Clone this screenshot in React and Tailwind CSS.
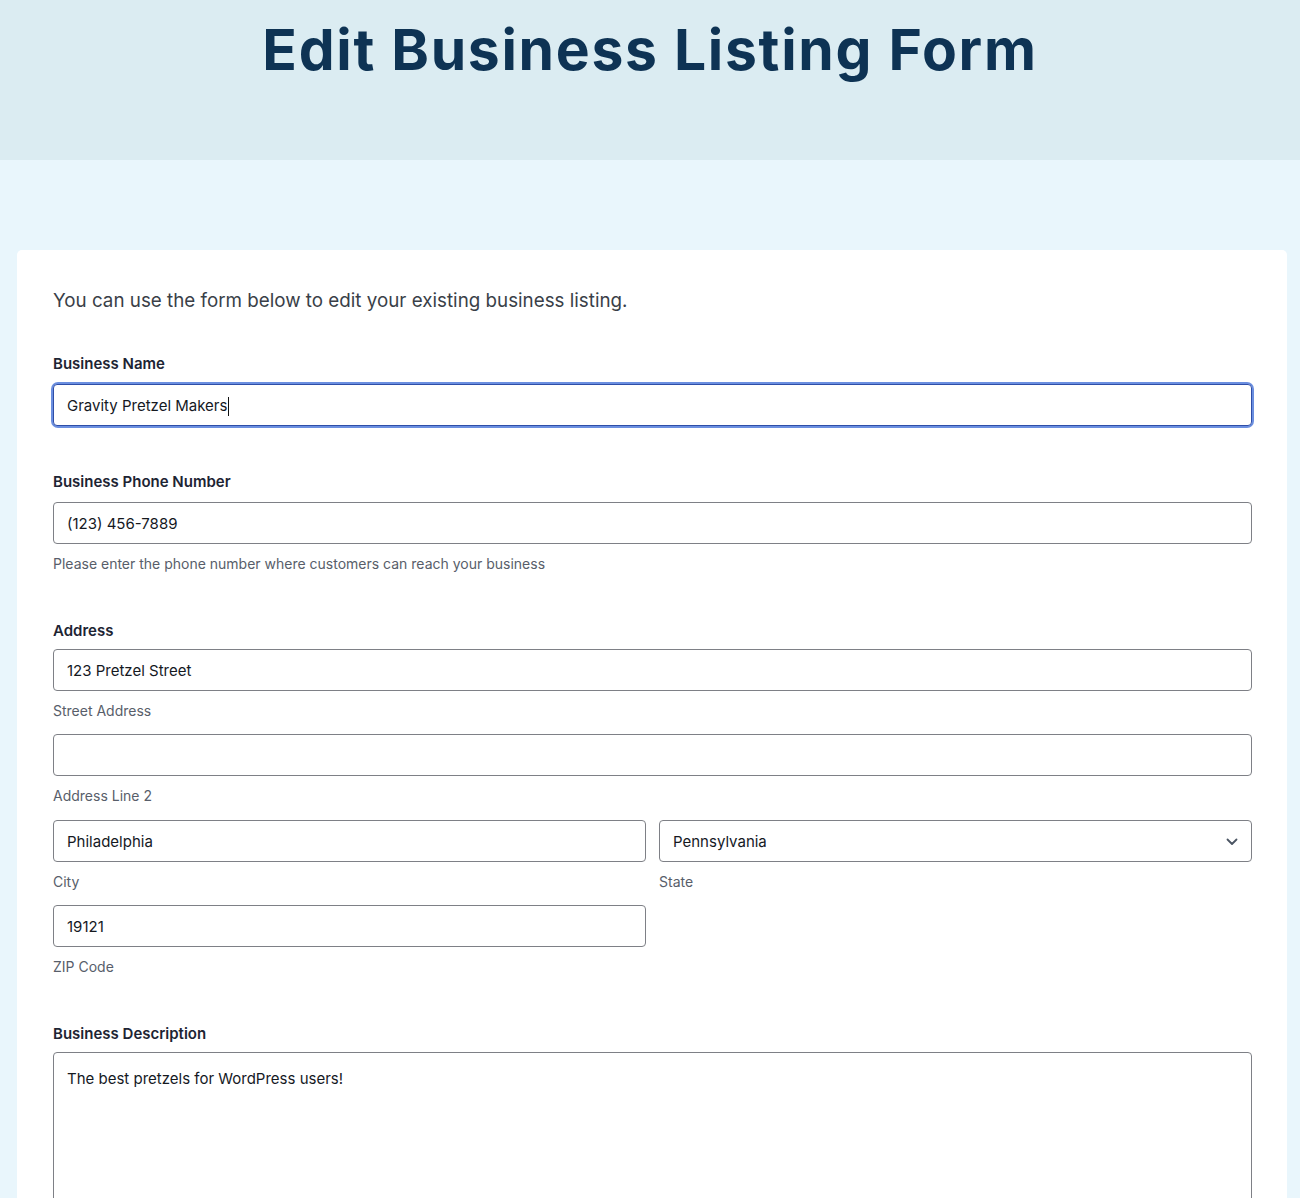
export default function App() {
  const body = { fontFamily: 'Inter, "Noto Sans", sans-serif' };
  const inputCls =
    "block w-full h-[42px] rounded-[4px] border border-[#7e8086] bg-white px-[13px] pt-[2px] text-[15px] text-[#15191f] outline-none";
  const labelCls = "block text-[15px] leading-[22px] font-semibold text-[#1d2433]";
  const subCls = "text-[14px] leading-[22px] text-[#585e6a] mt-[9px]";
  return (
    <div className="h-[1198px] overflow-hidden bg-[#e9f6fc]" style={body}>
      <header className="h-[160px] bg-[#dbecf2] flex justify-center">
        <h1 className="mt-[15px] text-[57px] leading-[70px] font-bold text-[#0e3354] tracking-[1.7px]">
          Edit Business Listing Form
        </h1>
      </header>
      <div className="pl-[17px] pr-[13px] pt-[90px] pb-[40px]">
        <div className="bg-white rounded-[5px] pl-[36px] pr-[35px] pt-[37px] pb-[60px]">
          <p className="text-[18.8px] leading-[28px] text-[#3a3f48]">
            You can use the form below to edit your existing business listing.
          </p>

          <div className="mt-[38px]">
            <label className={labelCls}>Business Name</label>
            <div className="mt-[9px] rounded-[5px] ring-2 ring-[#6b8fe0]">
              <div className="h-[42px] rounded-[4px] border border-[#2f4ea8] bg-white px-[13px] pt-[2px] flex items-center text-[15px] text-[#15191f]">
                Gravity Pretzel Makers
                <span className="inline-block w-px h-[19px] bg-[#111] ml-[1px]" />
              </div>
            </div>
          </div>

          <div className="mt-[45px]">
            <label className={labelCls}>Business Phone Number</label>
            <div className={"mt-[9px] flex items-center " + inputCls}>(123) 456-7889</div>
            <p className={subCls}>
              Please enter the phone number where customers can reach your business
            </p>
          </div>

          <div className="mt-[45px]">
            <label className={labelCls}>Address</label>
            <div className={"mt-[7px] flex items-center " + inputCls}>123 Pretzel Street</div>
            <p className={subCls}>Street Address</p>
            <div className={"mt-[12px] flex items-center " + inputCls}></div>
            <p className={subCls}>Address Line 2</p>
            <div className="mt-[13px] grid grid-cols-2 gap-x-[13px]">
              <div>
                <div className={"flex items-center " + inputCls}>Philadelphia</div>
                <p className={subCls}>City</p>
              </div>
              <div>
                <div className={"flex items-center justify-between " + inputCls}>
                  <span>Pennsylvania</span>
                  <svg width="12" height="8" viewBox="0 0 12 8" fill="none">
                    <path d="M1.5 1.5 L6 6 L10.5 1.5" stroke="#4b5563" strokeWidth="1.8" strokeLinecap="round" strokeLinejoin="round" />
                  </svg>
                </div>
                <p className={subCls}>State</p>
              </div>
              <div className="mt-[12px]">
                <div className={"flex items-center " + inputCls}>19121</div>
                <p className={subCls}>ZIP Code</p>
              </div>
            </div>
          </div>

          <div className="mt-[45px]">
            <label className={labelCls}>Business Description</label>
            <div className="mt-[7px] h-[250px] rounded-[4px] border border-[#7e8086] bg-white px-[13px] pt-[15px] text-[15px] text-[#15191f]">
              The best pretzels for WordPress users!
            </div>
          </div>
        </div>
      </div>
    </div>
  );
}
